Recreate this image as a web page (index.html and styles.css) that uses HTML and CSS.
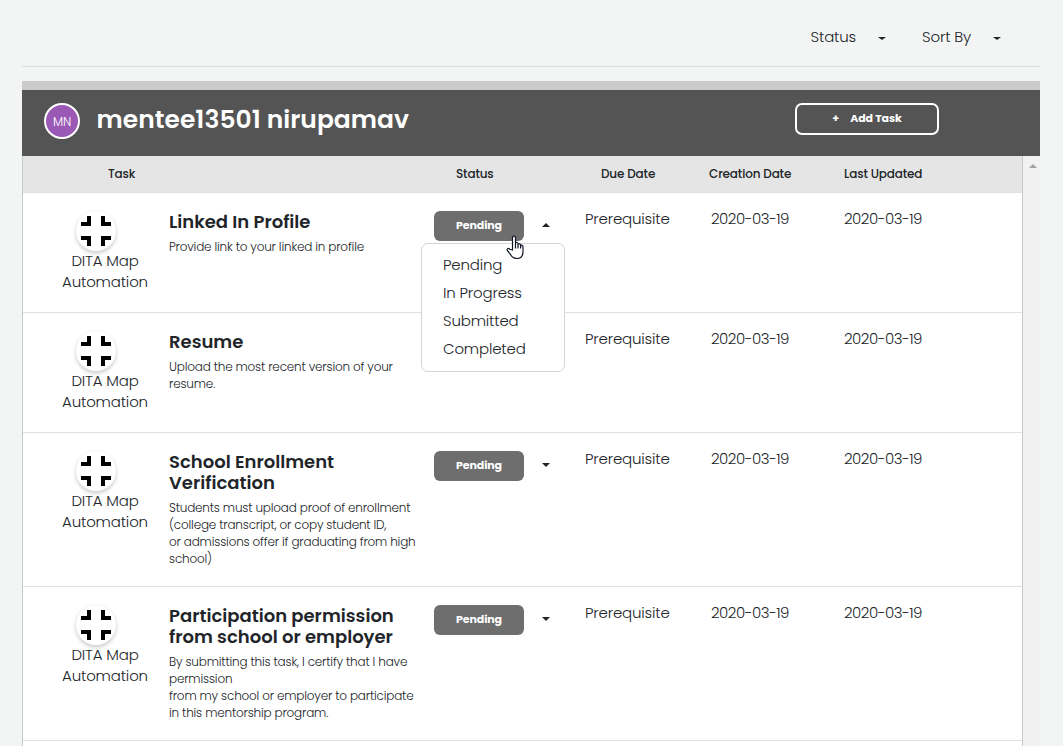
FILE: index.html
```html
<!DOCTYPE html>
<html lang="en">
<head>
<meta charset="utf-8">
<title>Mentee tasks</title>
<link rel="stylesheet" href="styles.css">
</head>
<body>
<svg class="sprite" aria-hidden="true">
  <symbol id="collapse" viewBox="0 0 30 30">
    <path d="M6 0h4v10H0V6h6zM20 0h4v6h6v4H20zM0 20h10v10H6v-6H0zM20 20h10v4h-6v6h-4z"/>
  </symbol>
</svg>
<nav class="filters">
  <div class="filter"><span>Status</span><i class="caret"></i></div>
  <div class="filter"><span>Sort By</span><i class="caret"></i></div>
</nav>
<main class="panel">
  <header class="banner">
    <div class="avatar">MN</div>
    <h1 class="name">mentee13501 nirupamav</h1>
    <button class="add"><span>+</span><span>Add Task</span></button>
  </header>
  <div class="scroller">
    <div class="table">
      <div class="row head">
        <div class="h-task">Task</div><div class="h-status">Status</div><div class="h-due">Due Date</div><div class="h-created">Creation Date</div><div class="h-updated">Last Updated</div>
      </div>
      <section class="row">
        <div class="program"><div class="badge"><svg class="icon"><use href="#collapse"/></svg></div><p>DITA Map<br>Automation</p></div>
        <div class="info"><h2>Linked In Profile</h2><p>Provide link to your linked in profile</p></div>
        <div class="status"><button class="pill">Pending</button><i class="caret up"></i>
          <ul class="menu"><li>Pending</li><li>In Progress</li><li>Submitted</li><li>Completed</li></ul>
          <svg class="cursor" viewBox="0 0 18 24"><path d="M6.5 15V3.2Q6.5 1 8 1t1.500 2.200V10V8.500Q9.600 7.200 11 7.500q1 .3 1 1.500V10q.2-1.500 1.500-1.200 1.100.3 1.100 1.500v.8q.3-1.300 1.400-.9 1 .4 1 1.800v4.200c0 3.500-1.500 7.300-6 7.300-4 0-5.300-1.500-6.600-4.200L1.300 15.500q-.6-1.500.6-2 1-.3 2 .8z"/><path d="M9.500 9.500v4M12 10v3.500M14.600 11v2.500"/></svg>
        </div>
        <div class="due">Prerequisite</div><div class="date">2020-03-19</div><div class="date">2020-03-19</div>
      </section>
      <section class="row">
        <div class="program"><div class="badge"><svg class="icon"><use href="#collapse"/></svg></div><p>DITA Map<br>Automation</p></div>
        <div class="info"><h2>Resume</h2><p>Upload the most recent version of your<br>resume.</p></div>
        <div class="status"></div>
        <div class="due">Prerequisite</div><div class="date">2020-03-19</div><div class="date">2020-03-19</div>
      </section>
      <section class="row tall">
        <div class="program"><div class="badge"><svg class="icon"><use href="#collapse"/></svg></div><p>DITA Map<br>Automation</p></div>
        <div class="info"><h2>School Enrollment<br>Verification</h2><p>Students must upload proof of enrollment<br>(college transcript, or copy student ID,<br>or admissions offer if graduating from high<br>school)</p></div>
        <div class="status"><button class="pill">Pending</button><i class="caret"></i></div>
        <div class="due">Prerequisite</div><div class="date">2020-03-19</div><div class="date">2020-03-19</div>
      </section>
      <section class="row tall">
        <div class="program"><div class="badge"><svg class="icon"><use href="#collapse"/></svg></div><p>DITA Map<br>Automation</p></div>
        <div class="info"><h2>Participation permission<br>from school or employer</h2><p>By submitting this task, I certify that I have<br>permission<br>from my school or employer to participate<br>in this mentorship program.</p></div>
        <div class="status"><button class="pill">Pending</button><i class="caret"></i></div>
        <div class="due">Prerequisite</div><div class="date">2020-03-19</div><div class="date">2020-03-19</div>
      </section>
    </div>
    <div class="scrollbar"><i class="arrow"></i></div>
  </div>
</main>
</body>
</html>
```
FILE: styles.css
```css
* { box-sizing: border-box; }
body {
  margin: 0;
  height: 746px;
  padding: 0 23px 0 22px;
  overflow: hidden;
  background: #f3f5f4;
  color: #212529;
  font: 300 15px/21px Poppins, Inter, sans-serif;
  letter-spacing: -0.18px;
}
h1, h2, p, ul { margin: 0; padding: 0; }
button { font-family: inherit; padding: 0; }
.sprite { display: none; }
.filters {
  display: flex;
  justify-content: flex-end;
  gap: 36px;
  height: 67px;
  padding: 26px 39px 0 0;
  border-bottom: 1px solid #dcdede;
}
.filter { display: flex; gap: 22px; }
.caret {
  width: 0;
  height: 0;
  margin-top: 11px;
  border: 4px solid transparent;
  border-top: 3px solid #212529;
  border-bottom: 0;
}
.panel { width: 1018px; margin-top: 14px; border-top: 9px solid #cbcbcb; }
.banner { display: flex; height: 66px; padding: 13px 101px 0 22px; background: #545454; color: #fff; }
.avatar {
  width: 36px;
  height: 36px;
  border: 2px solid #fff;
  border-radius: 50%;
  background: #9b59b6;
  font-size: 12px;
  line-height: 33px;
  text-align: center;
}
.name { margin: 2px 0 0 16.5px; font-size: 25px; font-weight: 600; line-height: 30px; letter-spacing: 0.02px; white-space: nowrap; }
.add {
  display: flex;
  justify-content: center;
  gap: 11px;
  width: 144px;
  height: 32px;
  margin-left: auto;
  border: 2px solid #fff;
  border-radius: 7px;
  background: none;
  color: #fff;
  font-size: 11px;
  font-weight: 700;
  line-height: 26px;
  letter-spacing: -0.1px;
}
.scroller { display: flex; height: 590px; }
.table { width: 1001px; border: solid #c9cacc; border-width: 0 1px; background: #fff; }
.row {
  display: grid;
  grid-template-columns: 146px 265px 151px 126px 133px 1fr;
  height: 120px;
  border-bottom: 1px solid #dee2e6;
  white-space: nowrap;
}
.row.tall { height: 154px; }
.row.head {
  grid-template-columns: 85px 348px 145px 108px 135px 1fr;
  height: 37px;
  background: #e5e5e5;
  font-size: 12px;
  font-weight: 500;
  letter-spacing: -0.15px;
  line-height: 36px;
}
.program { padding-top: 18px; }
.h-task { grid-column: 2; }
.program p { width: 164px; text-align: center; }
.badge {
  display: flex;
  align-items: center;
  justify-content: center;
  width: 40px;
  height: 40px;
  margin: 0 0 -1px 53px;
  border-radius: 50%;
  box-shadow: 0 2px 4px rgba(0, 0, 0, .22);
}
.icon { width: 30px; height: 30px; fill: #000; }
.info { padding-top: 18px; }
.info h2 { font-size: 18px; font-weight: 600; line-height: 21px; letter-spacing: 0; }
.info p { margin-top: 6px; font-size: 12px; line-height: 17px; letter-spacing: -0.19px; }
.status { position: relative; display: flex; align-items: flex-start; padding-top: 18px; }
.pill {
  width: 90px;
  height: 30px;
  padding-bottom: 2px;
  border: 0;
  border-radius: 6px;
  background: #6e6e6e;
  color: #fff;
  font-size: 11px;
  font-weight: 700;
  line-height: 28px;
  letter-spacing: -0.1px;
}
.status .caret { margin: 12px 0 0 18px; border-top-width: 4px; }
.status .caret.up { border-top: 0; border-bottom: 4px solid #212529; }
.menu {
  position: absolute;
  z-index: 1;
  top: 50px;
  left: -13px;
  width: 144px;
  height: 129px;
  padding: 7px 0 0 21px;
  border: 1px solid #d3d4d5;
  border-radius: 7px;
  background: #fff;
  line-height: 28px;
  list-style: none;
}
.cursor { position: absolute; z-index: 2; top: 42px; left: 72px; width: 18px; height: 24px; fill: #fff; stroke: #101522; stroke-width: 1.2; }
.due, .date { padding-top: 15px; }
.date { letter-spacing: -0.5px; }
.scrollbar { width: 17px; padding: 8px 0 0 6px; background: #f1f1f1; }
.arrow { display: block; width: 0; height: 0; border: 4px solid transparent; border-top: 0; border-bottom: 4px solid #a3a3a3; }
```
